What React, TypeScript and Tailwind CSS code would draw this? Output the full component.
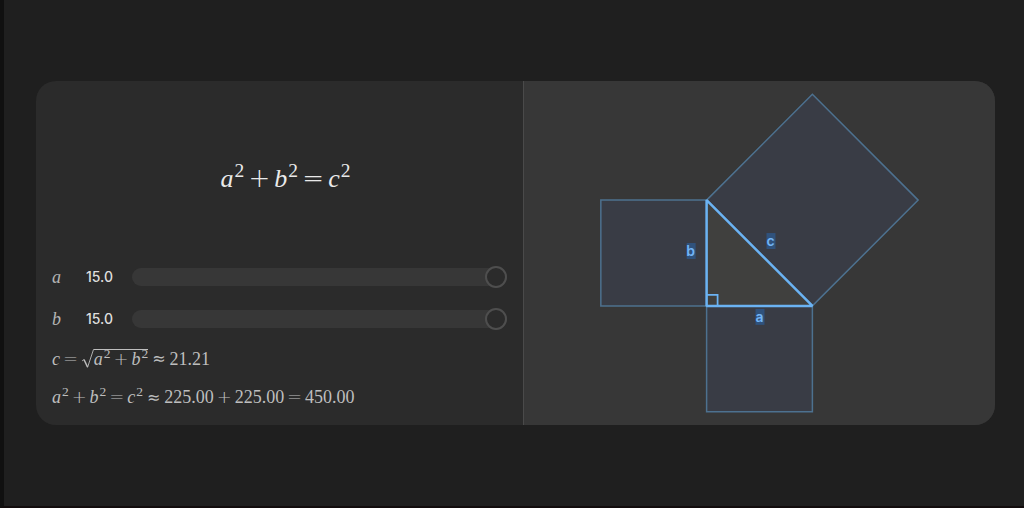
import { useState, type ReactNode } from "react";

const MIN = 1;
const MAX = 15;
const VIEW_W = 472;
const VIEW_H = 344;

function Sq() {
  return <sup className="relative -top-[0.5em] ml-px text-[75%] leading-none not-italic">2</sup>;
}

function Op({ children }: { children: string }) {
  return (
    <span className="mx-[0.16em] font-['DejaVu_Sans',sans-serif] leading-none font-extralight">
      {children}
    </span>
  );
}

function Approx() {
  return <span className="mx-1 font-['DejaVu_Sans',sans-serif] text-base leading-none">≈</span>;
}

function Root({ children }: { children: ReactNode }) {
  return (
    <span className="inline-flex items-stretch">
      <svg className="h-5 w-[13px]" viewBox="0 0 13 20" fill="none" stroke="currentColor">
        <path d="M1 12 L3 10.5" strokeWidth="0.8" />
        <path d="M3 10.5 L6.5 18" strokeWidth="1.5" />
        <path d="M6.5 18.5 L12.5 0.5 H13" strokeWidth="0.9" />
      </svg>
      <span className="border-t border-current leading-[18px]">{children}</span>
    </span>
  );
}

type SliderProps = {
  name: string;
  value: number;
  onChange: (value: number) => void;
};

function Slider({ name, value, onChange }: SliderProps) {
  return (
    <div className="flex h-[22px] items-center">
      <label
        htmlFor={`side-${name}`}
        className="w-[34px] font-['Liberation_Serif',serif] text-lg text-[#b4b4b4]"
      >
        <i>{name}</i>
      </label>
      <output
        htmlFor={`side-${name}`}
        className="w-[46px] font-[Inter,sans-serif] text-sm font-medium text-[#dedede]"
      >
        {value.toFixed(1)}
      </output>
      <input
        id={`side-${name}`}
        type="range"
        min={MIN}
        max={MAX}
        step={0.1}
        value={value}
        onChange={(e) => onChange(Number(e.target.value))}
        className="h-[18px] min-w-0 flex-1 cursor-pointer appearance-none rounded-full bg-[#373737] [&::-webkit-slider-thumb]:size-[22px] [&::-webkit-slider-thumb]:appearance-none [&::-webkit-slider-thumb]:rounded-full [&::-webkit-slider-thumb]:border-2 [&::-webkit-slider-thumb]:border-[#4e4e4e] [&::-webkit-slider-thumb]:bg-[#2b2b2b]"
      />
    </div>
  );
}

function SideLabel({ x, y, children }: { x: number; y: number; children: string }) {
  return (
    <g>
      <rect x={x - 4} y={y - 8} width="9" height="16" fill="#30527c" />
      <text
        x={x}
        y={y + 5}
        textAnchor="middle"
        fill="#72b4f5"
        className="font-[Inter,sans-serif] text-sm font-semibold"
      >
        {children}
      </text>
    </g>
  );
}

function Diagram({ a, b }: { a: number; b: number }) {
  const scale = 318 / Math.max(a + 2 * b, b + 2 * a);
  const w = a * scale;
  const h = b * scale;

  // right-angle corner, placed so the three squares are centred
  const x = VIEW_W / 2 - w / 2;
  const y = VIEW_H / 2 + h / 2;

  const squares = [
    [[x, y], [x, y - h], [x - h, y - h], [x - h, y]],
    [[x, y], [x + w, y], [x + w, y + w], [x, y + w]],
    [[x, y - h], [x + h, y - h - w], [x + h + w, y - w], [x + w, y]],
  ];

  return (
    <svg
      viewBox={`0 0 ${VIEW_W} ${VIEW_H}`}
      className="h-full w-full"
      role="img"
      aria-label="Right triangle with a square on each side"
    >
      {squares.map((points, i) => (
        <polygon key={i} points={points.join(" ")} fill="#393c45" stroke="#4d718f" strokeWidth="1.5" />
      ))}
      <polygon
        points={`${x},${y} ${x},${y - h} ${x + w},${y}`}
        fill="#40403e"
        stroke="#6bb3f3"
        strokeWidth="2.5"
        strokeLinejoin="bevel"
      />
      <path d={`M${x} ${y - 11} h11 v11`} fill="none" stroke="#6bb3f3" strokeWidth="1.75" />
      <SideLabel x={x + w / 2} y={y + 11}>a</SideLabel>
      <SideLabel x={x - 16} y={y - h / 2 - 2}>b</SideLabel>
      <SideLabel x={x + w / 2 + 11} y={y - h / 2 - 12}>c</SideLabel>
    </svg>
  );
}

export default function App() {
  const [a, setA] = useState(15);
  const [b, setB] = useState(15);
  const cc = a * a + b * b;

  return (
    <main className="flex min-h-screen items-center border-b-2 border-l-4 border-b-[#120c0d] border-l-[#101010] bg-[#1f1f1f] pr-[29px] pl-8">
      <div className="grid w-full grid-cols-[487fr_472fr] overflow-hidden rounded-[20px] bg-[#2b2b2b]">
        {/* Formula and controls */}
        <section className="flex flex-col gap-5 px-4 pb-[19px] font-['Liberation_Serif',serif] text-lg text-[#bebebe]">
          <h1 className="pt-[82px] pb-[51px] pl-3 text-center text-[26px] leading-8 whitespace-nowrap text-[#eaeaea]">
            <i>a</i><Sq /><Op>+</Op><i>b</i><Sq /><Op>=</Op><i>c</i><Sq />
          </h1>

          <Slider name="a" value={a} onChange={setA} />
          <Slider name="b" value={b} onChange={setB} />

          <p className="flex h-[18px] items-center leading-[18px] whitespace-nowrap">
            <i>c</i>
            <Op>=</Op>
            <Root>
              <i>a</i><Sq /><Op>+</Op><i>b</i><Sq />
            </Root>
            <Approx />
            {Math.sqrt(cc).toFixed(2)}
          </p>
          <p className="h-[18px] leading-[18px] whitespace-nowrap">
            <i>a</i><Sq /><Op>+</Op><i>b</i><Sq />
            <Op>=</Op><i>c</i><Sq /><Approx />
            {(a * a).toFixed(2)}<Op>+</Op>{(b * b).toFixed(2)}<Op>=</Op>{cc.toFixed(2)}
          </p>
        </section>

        {/* Diagram */}
        <section className="border-l border-[#4a4a4a] bg-[#373737]">
          <Diagram a={a} b={b} />
        </section>
      </div>
    </main>
  );
}
